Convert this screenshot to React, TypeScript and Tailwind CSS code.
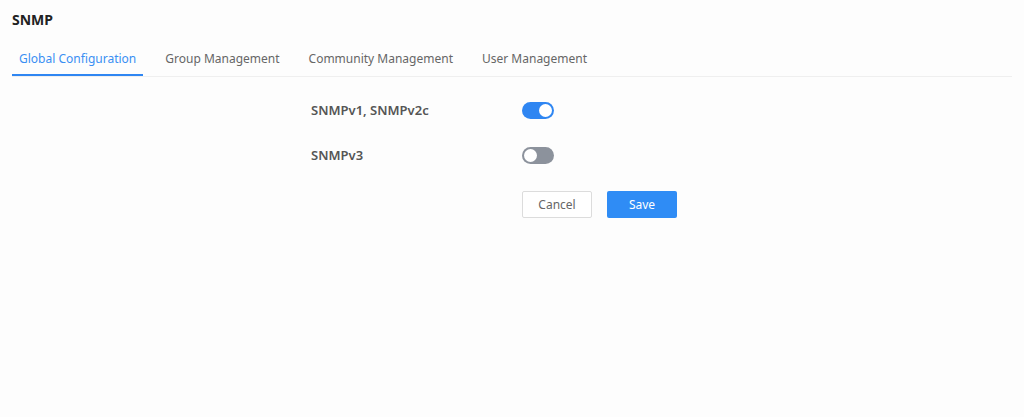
import React, { useState } from "react";

function Toggle({ on, onChange }: { on: boolean; onChange: () => void }) {
  return (
    <button
      type="button"
      onClick={onChange}
      className={`relative h-[17px] w-[32px] rounded-full transition-colors ${
        on ? "bg-[#2f86f2]" : "bg-[#8c929c]"
      }`}
    >
      <span
        className={`absolute top-[2px] h-[13px] w-[13px] rounded-full bg-white ${
          on ? "left-[17px]" : "left-[2px]"
        }`}
      />
    </button>
  );
}

const tabs = [
  "Global Configuration",
  "Group Management",
  "Community Management",
  "User Management",
];

export default function App() {
  const [v2, setV2] = useState(true);
  const [v3, setV3] = useState(false);
  const [active, setActive] = useState(0);

  return (
    <div
      className="h-[417px] w-full bg-[#fdfdfd] px-[12px] text-[#333]"
      style={{ fontFamily: '"Noto Sans", "Open Sans", sans-serif' }}
    >
      <h1 className="pt-[10px] text-[14px] font-bold leading-[20px] text-[#222]">SNMP</h1>

      <div className="mt-[18px] flex border-b border-[#efefef]">
        {tabs.map((t, i) => (
          <button
            key={t}
            type="button"
            onClick={() => setActive(i)}
            className={`mr-[15px] px-[7px] pb-[4px] text-[12px] leading-[22px] ${
              i === active
                ? "border-b-2 border-[#2f86f2] text-[#3a8ff3]"
                : "border-b-2 border-transparent text-[#666]"
            }`}
          >
            {t}
          </button>
        ))}
      </div>

      <div className="ml-[299px] pt-[25px]">
        <div className="flex h-[17px] items-center">
          <span className="w-[211px] text-[13px] font-semibold text-[#555]">SNMPv1, SNMPv2c</span>
          <Toggle on={v2} onChange={() => setV2(!v2)} />
        </div>
        <div className="mt-[28px] flex h-[17px] items-center">
          <span className="w-[211px] text-[13px] font-semibold text-[#555]">SNMPv3</span>
          <Toggle on={v3} onChange={() => setV3(!v3)} />
        </div>
        <div className="ml-[211px] mt-[27px] flex gap-[15px]">
          <button
            type="button"
            className="h-[27px] w-[70px] rounded-[2px] border border-[#dcdcdc] bg-white text-[12px] text-[#666]"
          >
            Cancel
          </button>
          <button
            type="button"
            className="h-[27px] w-[70px] rounded-[2px] bg-[#2f8cf5] text-[12px] text-white"
          >
            Save
          </button>
        </div>
      </div>
    </div>
  );
}
